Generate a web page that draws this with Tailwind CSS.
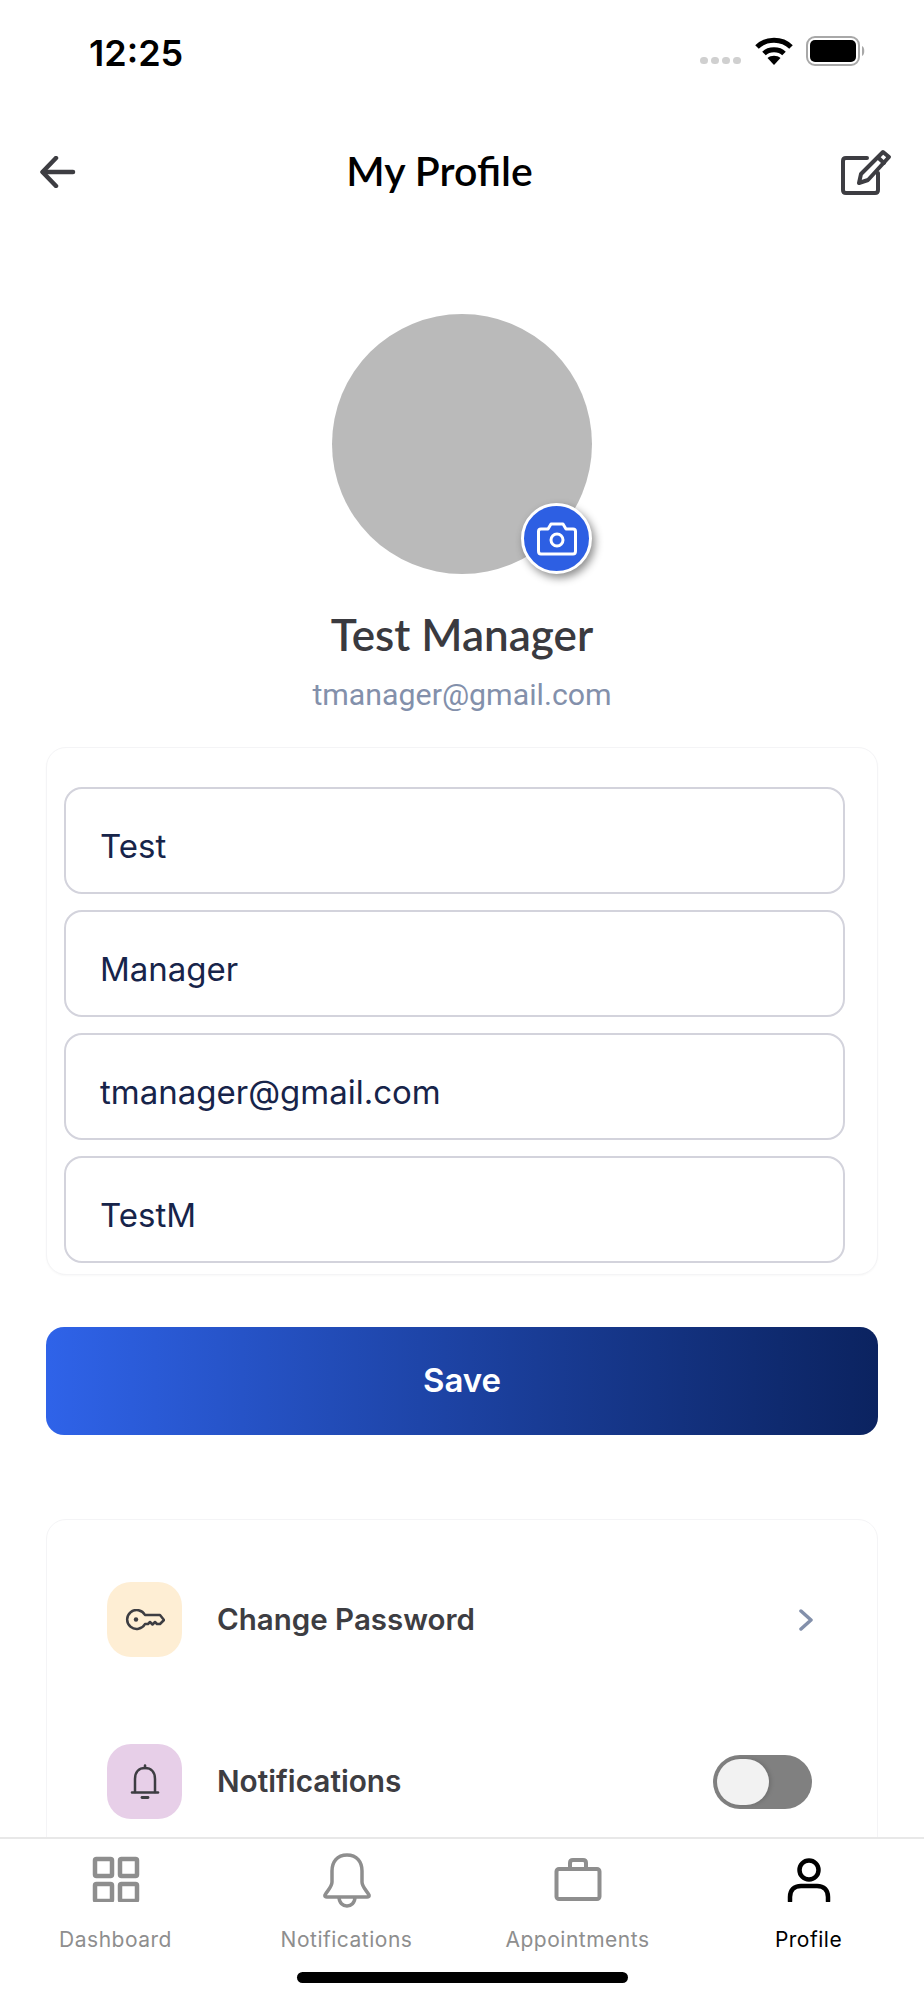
<!DOCTYPE html>
<html lang="en">
<head>
  <meta charset="UTF-8">
  <meta name="viewport" content="width=device-width, initial-scale=1">
  <title>My Profile</title>
  <script src="https://cdn.jsdelivr.net/npm/@tailwindcss/browser@4"></script>
</head>

<body class="bg-white font-['Inter',sans-serif]">
  <div class="relative w-[924px] h-[2000px] overflow-hidden bg-white">

    <!-- Status bar -->
    <div class="h-[106px] flex items-start justify-between pl-[89px] pr-[58px] pt-[32px]">
      <span class="text-[36px] leading-[42px] font-semibold text-black">12:25</span>
      <div class="flex items-center pt-[4px]">
        <div class="flex gap-[3px] mt-[18px] mr-[14px]">
          <span class="w-[8px] h-[7px] rounded-full bg-[#d0d0d0]"></span>
          <span class="w-[8px] h-[7px] rounded-full bg-[#d0d0d0]"></span>
          <span class="w-[8px] h-[7px] rounded-full bg-[#d0d0d0]"></span>
          <span class="w-[8px] h-[7px] rounded-full bg-[#d0d0d0]"></span>
        </div>
        <svg class="w-[38px] h-[28px] mr-[13px]" viewBox="0 0 38 28" fill="none" stroke="#000" stroke-width="5">
          <path d="M2 10 C11 1 27 1 36 10"/>
          <path d="M9 16.5 C14 11.5 24 11.5 29 16.5"/>
          <path d="M19 28 L12.5 21 C16 18 22 18 25.500 21 Z" fill="#000" stroke="none"/>
        </svg>
        <svg class="w-[60px] h-[30px]" viewBox="0 0 60 30" fill="none">
          <rect x="1" y="1" width="52" height="28" rx="8" stroke="#a8a8a8" stroke-width="2"/>
          <rect x="4" y="4" width="46" height="22" rx="5" fill="#000"/>
          <path d="M56 10 C59 11 59 19 56 20 Z" fill="#a8a8a8"/>
        </svg>
      </div>
    </div>

    <!-- Header -->
    <div class="h-[132px] flex items-center justify-between pl-[40px] pr-[32px]">
      <svg class="w-[36px] h-[32px]" viewBox="0 0 36 32" fill="none" stroke="#3d3d42" stroke-width="4.500" stroke-linecap="round" stroke-linejoin="round">
        <path d="M33 16 H3"/>
        <path d="M16 2 L2.500 16 L16 30"/>
      </svg>
      <h1 class="mr-[37px] mb-[2px] font-['Lato',sans-serif] text-[41px] leading-[50px] font-semibold text-black">My Profile</h1>
      <svg class="w-[52px] h-[46px]" viewBox="0 0 52 46" fill="none" stroke="#3d3d42" stroke-width="4" stroke-linecap="round" stroke-linejoin="round">
        <path d="M27 9 H6 Q3 9 3 12 V41 Q3 44 6 44 H35 Q38 44 38 41 V24"/>
        <path d="M43 3 L49 8 L28 31 L19 34 L21 25 Z"/>
        <path d="M38 8.500 L44 14"/>
      </svg>
    </div>

    <!-- Avatar -->
    <div class="flex flex-col items-center mt-[76px]">
      <div class="relative w-[260px] h-[260px] rounded-full bg-[#bababa]">
        <div class="absolute right-0 bottom-0 w-[71px] h-[71px] rounded-full bg-[#2d5fe3] border-[3px] border-white shadow-[3px_4px_8px_rgba(0,0,0,0.45)] flex items-center justify-center">
          <svg class="w-[40px] h-[34px]" viewBox="0 0 40 34" fill="none" stroke="#fff" stroke-width="3" stroke-linejoin="round">
            <path d="M4 7 H11 L14 2 H26 L29 7 H36 Q38.500 7 38.500 9.500 V29 Q38.500 32 36 32 H4 Q1.500 32 1.500 29 V9.500 Q1.500 7 4 7 Z"/>
            <circle cx="20" cy="18" r="6"/>
          </svg>
        </div>
      </div>
      <h2 class="mt-[35px] font-['Lato',sans-serif] text-[44px] leading-[50px] font-semibold text-[#3a3a3f]">Test Manager</h2>
      <p class="mt-[18px] font-['Roboto',sans-serif] text-[30.300px] leading-[36px] text-[#8390ab]">tmanager@gmail.com</p>
    </div>

    <!-- Form card -->
    <div class="mt-[34px] mx-[46px] h-[528px] rounded-[20px] bg-white border border-[#f4f4f6] shadow-[0_1px_2px_rgba(0,0,0,0.03)] pl-[17px] pr-[32px] pt-[39px] flex flex-col gap-[16px]">
      <div class="h-[107px] shrink-0 rounded-[18px] border-2 border-[#d3d3dc] pl-[34px] pt-[12px] flex items-center text-[33px] text-[#17244a]">Test</div>
      <div class="h-[107px] shrink-0 rounded-[18px] border-2 border-[#d3d3dc] pl-[34px] pt-[12px] flex items-center text-[33px] text-[#17244a]">Manager</div>
      <div class="h-[107px] shrink-0 rounded-[18px] border-2 border-[#d3d3dc] pl-[34px] pt-[12px] flex items-center text-[33px] text-[#17244a]">tmanager@gmail.com</div>
      <div class="h-[107px] shrink-0 rounded-[18px] border-2 border-[#d3d3dc] pl-[34px] pt-[12px] flex items-center text-[33px] text-[#17244a]">TestM</div>
    </div>

    <!-- Save -->
    <button class="block mt-[52px] mx-[46px] w-[832px] h-[108px] rounded-[18px] bg-linear-to-r from-[#2f63e9] to-[#0b2360] text-white text-[33px] font-semibold">Save</button>

    <!-- Settings card -->
    <div class="mt-[84px] mx-[46px] h-[420px] rounded-[20px] bg-white border border-[#f4f4f6] pl-[60px] pr-[65px] pt-[62px] flex flex-col gap-[87px]">
      <div class="flex items-center h-[75px] shrink-0">
        <div class="w-[75px] h-[75px] rounded-[24px] bg-[#feeed4] flex items-center justify-center">
          <svg class="w-[40px] h-[22px]" viewBox="0 0 40 22" fill="none" stroke="#3d3d42" stroke-width="2.500" stroke-linejoin="round">
            <path d="M20 6 H35 L39 11 L35 15 H32 L30 13 L27.500 15.500 L25 13 L23 15 H20 A 9.500 9.500 0 1 1 20 6 Z"/>
            <circle cx="11" cy="10.500" r="2.200" fill="#3d3d42" stroke="none"/>
          </svg>
        </div>
        <span class="ml-[35px] flex-1 text-[29.500px] font-semibold text-[#3d3d42]">Change Password</span>
        <svg class="w-[14px] h-[22px] mr-[-1px]" viewBox="0 0 14 22" fill="none" stroke="#8390ab" stroke-width="3.500" stroke-linecap="round" stroke-linejoin="round">
          <path d="M2 2 L12 11 L2 20"/>
        </svg>
      </div>
      <div class="flex items-center h-[75px] shrink-0">
        <div class="w-[75px] h-[75px] rounded-[24px] bg-[#e7cfe8] flex items-center justify-center">
          <svg class="w-[30px] h-[36px]" viewBox="0 0 30 36" fill="none" stroke="#3d3d42" stroke-width="2.500" stroke-linecap="round">
            <path d="M5 28 V15 C5 8 9 4 15 4 C21 4 25 8 25 15 V28"/>
            <path d="M2 28.500 H28"/>
            <path d="M15 1.500 V4"/>
            <path d="M12 33.500 H18" stroke-width="2.800"/>
          </svg>
        </div>
        <span class="ml-[35px] flex-1 text-[29.800px] font-semibold text-[#3d3d42]">Notifications</span>
        <div class="w-[99px] h-[54px] rounded-full bg-[#808080] p-[4px]">
          <div class="w-[52px] h-[46px] rounded-full bg-[#f2f2f2] shadow-[2px_0_4px_rgba(0,0,0,0.15)]"></div>
        </div>
      </div>
    </div>

    <!-- Tab bar -->
    <div class="absolute left-0 right-0 bottom-0 h-[163px] bg-white border-t-2 border-[#e8e8e8] grid grid-cols-4 pt-[15px]">
      <div class="flex flex-col items-center">
        <svg class="w-[48px] h-[48px]" viewBox="0 0 48 48" fill="none" stroke="#8e8e8e" stroke-width="4.500" stroke-linejoin="round">
          <rect x="3" y="5" width="17" height="17" rx="1.500"/>
          <rect x="28" y="5" width="17" height="17" rx="1.500"/>
          <rect x="3" y="30" width="17" height="17" rx="1.500"/>
          <rect x="28" y="30" width="17" height="17" rx="1.500"/>
        </svg>
        <span class="mt-[25px] text-[21px] leading-[26px] tracking-[0.5px] text-[#8e8e8e]">Dashboard</span>
      </div>
      <div class="flex flex-col items-center">
        <svg class="w-[48px] h-[56px] mt-[-1px] mb-[-7px]" viewBox="0 0 48 56" fill="none" stroke="#8e8e8e" stroke-width="3.500" stroke-linejoin="round">
          <path d="M24 2 C14 2 9 9 9 18 V29 C9 34 4 38 2 42 Q1.500 44 4 44 H44 Q46.500 44 46 42 C44 38 39 34 39 29 V18 C39 9 34 2 24 2 Z"/>
          <path d="M16 44 C16 56 32 56 32 44"/>
        </svg>
        <span class="mt-[25px] text-[21px] leading-[26px] tracking-[0.5px] text-[#8e8e8e]">Notifications</span>
      </div>
      <div class="flex flex-col items-center">
        <svg class="w-[48px] h-[48px]" viewBox="0 0 48 48" fill="none" stroke="#8e8e8e" stroke-width="4" stroke-linejoin="round">
          <rect x="2.500" y="15" width="43" height="30" rx="2.500"/>
          <path d="M16 15 V9 Q16 6 19 6 H29 Q32 6 32 9 V15"/>
        </svg>
        <span class="mt-[25px] text-[21px] leading-[26px] tracking-[0.5px] text-[#8e8e8e]">Appointments</span>
      </div>
      <div class="flex flex-col items-center">
        <svg class="w-[48px] h-[48px]" viewBox="0 0 48 48" fill="none" stroke="#000" stroke-width="4.500" stroke-linecap="round">
          <circle cx="24" cy="16" r="9.500"/>
          <path d="M5 47 V43 C5 36 9 32 16 32 H32 C39 32 43 36 43 43 V47"/>
        </svg>
        <span class="mt-[25px] text-[21px] leading-[26px] tracking-[0.5px] text-black">Profile</span>
      </div>
    </div>

    <!-- Home indicator -->
    <div class="absolute left-[297px] bottom-[17px] w-[331px] h-[11px] rounded-full bg-black"></div>
  </div>
</body>
</html>
